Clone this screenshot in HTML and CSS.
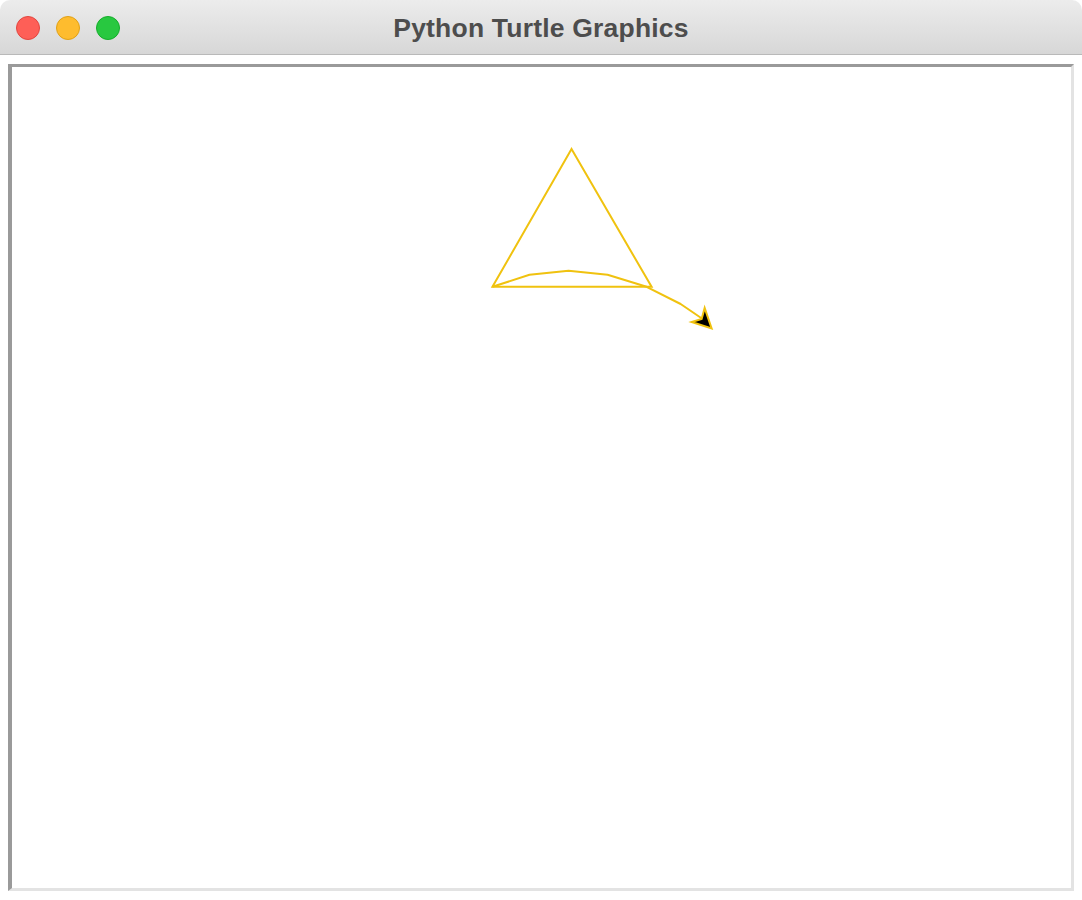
FILE: index.html
```html
<!DOCTYPE html>
<html>
<head>
<meta charset="utf-8">
<title>Python Turtle Graphics</title>
<link rel="stylesheet" href="styles.css">
</head>
<body>
<div class="window">
  <div class="titlebar">
    <div class="lights">
      <span class="light red"></span>
      <span class="light yellow"></span>
      <span class="light green"></span>
    </div>
    <div class="title">Python Turtle Graphics</div>
    <div class="spacer"></div>
  </div>
  <div class="content">
    <div class="canvas">
      <svg class="drawing" viewBox="12 67 1058 821" preserveAspectRatio="none" xmlns="http://www.w3.org/2000/svg">
        <polygon points="492,286.8 571,149 651,286.8" fill="none" stroke="#f0c20f" stroke-width="2" stroke-linejoin="miter"/>
        <polyline points="492,286.8 529,274.8 568,270.8 607,274.8 646,286.8 680,304 702,319" fill="none" stroke="#f0c20f" stroke-width="2" stroke-linejoin="round"/>
        <polygon points="711,328.5 704,308 701,319 691,322" fill="#000" stroke="#f0c20f" stroke-width="2" stroke-linejoin="miter"/>
      </svg>
    </div>
  </div>
</div>
</body>
</html>
```

FILE: styles.css
```css
html, body {
  margin: 0;
  padding: 0;
  background: #ffffff;
}

.window {
  width: 1082px;
  height: 900px;
  display: flex;
  flex-direction: column;
  background: #ffffff;
  border-radius: 10px;
  overflow: hidden;
  box-sizing: border-box;
}

.titlebar {
  height: 54px;
  flex: 0 0 54px;
  border-bottom: 1px solid #b9b9b9;
  background: linear-gradient(#ececec, #d7d7d7);
  display: grid;
  grid-template-columns: 1fr auto 1fr;
  align-items: center;
}

.lights {
  display: flex;
  gap: 16px;
  padding-left: 16px;
  padding-top: 1px;
}

.light {
  width: 24px;
  height: 24px;
  border-radius: 50%;
  box-sizing: border-box;
  display: block;
}

.red {
  background: #fe5f57;
  border: 1px solid #e2463f;
}

.yellow {
  background: #febc2e;
  border: 1px solid #e1a116;
}

.green {
  background: #28c840;
  border: 1px solid #14ae2a;
}

.title {
  font-family: "Liberation Sans", Arial, sans-serif;
  font-weight: bold;
  font-size: 26.5px;
  color: #4d4d4d;
  letter-spacing: 0.2px;
  padding-top: 2px;
}

.content {
  flex: 1;
  display: flex;
  padding: 9px 8px 9px 8px;
  min-height: 0;
}

.canvas {
  flex: 1;
  background: #ffffff;
  border-top: 3px solid #9a9a9a;
  border-left: 4px solid #9a9a9a;
  border-right: 3px solid #e3e3e3;
  border-bottom: 3px solid #e3e3e3;
  display: flex;
}

.drawing {
  width: 100%;
  height: 100%;
  display: block;
}
```
